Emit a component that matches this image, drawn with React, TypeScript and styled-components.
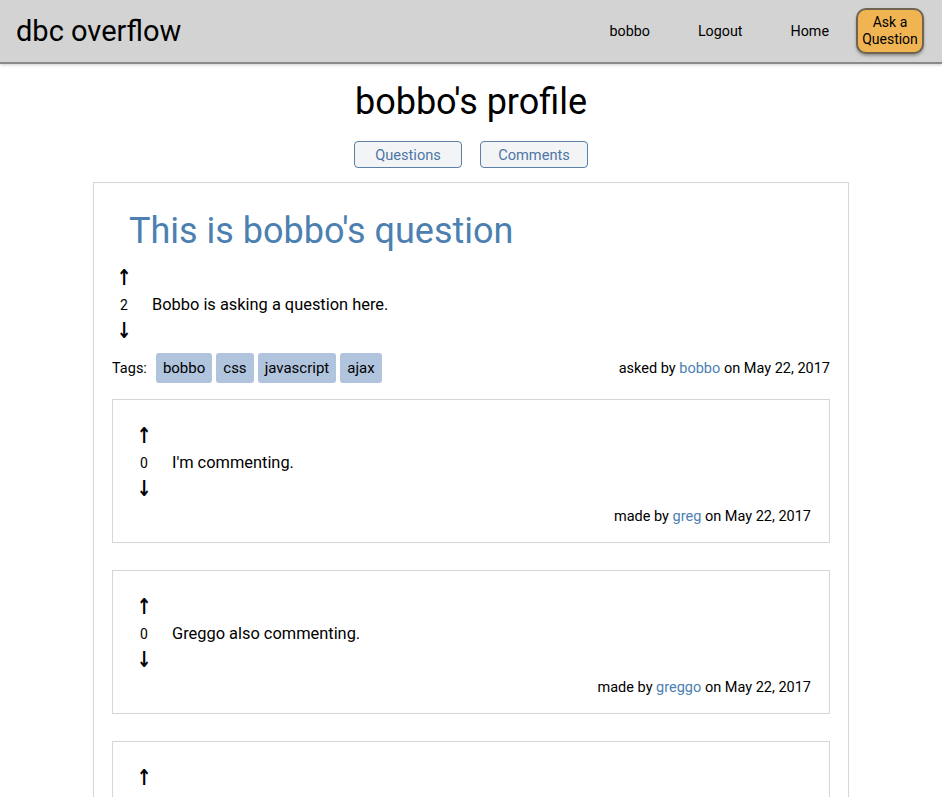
import React from "react";
import styled, { createGlobalStyle } from "styled-components";

const Global = createGlobalStyle`
  html, body { margin: 0; padding: 0; background: #fff; }
  body { font-family: Roboto, "Noto Sans", sans-serif; color: #000; }
`;

const Header = styled.header`
  height: 62px;
  background: #d3d3d3;
  border-bottom: 2px solid #8a8a8a;
  box-shadow: 0 1px 3px rgba(0,0,0,0.2);
  display: flex;
  align-items: center;
  padding: 0 18px 0 16px;
`;

const Brand = styled.div`
  font-size: 29px;
  flex: 1;
`;

const Nav = styled.nav`
  display: flex;
  align-items: center;
  gap: 48px;
`;

const NavLink = styled.a`
  font-size: 14.3px;
  color: #000;
  text-decoration: none;
`;

const AskButton = styled.button`
  width: 68px;
  height: 46px;
  margin-left: -21px;
  background: #f0b552;
  border: 2px solid #6e6450;
  border-radius: 10px;
  box-shadow: 0 2px 3px rgba(0,0,0,0.3);
  font-family: inherit;
  font-size: 14px;
  line-height: 17px;
  padding: 0;
  color: #000;
`;

const Main = styled.main`
  display: flex;
  flex-direction: column;
  align-items: center;
`;

const ProfileTitle = styled.h1`
  font-size: 36px;
  font-weight: 400;
  margin: 17px 0 0;
  line-height: 42px;
`;

const Tabs = styled.div`
  display: flex;
  gap: 18px;
  margin-top: 18px;
`;

const TabButton = styled.button`
  width: 108px;
  height: 27px;
  background: #f3f4f6;
  border: 1px solid #5b7fa6;
  border-radius: 4px;
  color: #4d76a5;
  font-family: inherit;
  font-size: 14.6px;
  padding: 0;
`;

const Card = styled.section`
  width: 756px;
  box-sizing: border-box;
  margin-top: 14px;
  border: 1px solid #d6d6d6;
  padding: 0 18px 0 18px;
`;

const QTitle = styled.h2`
  font-size: 36px;
  font-weight: 400;
  color: #4b80b0;
  margin: 26px 0 0 17px;
  line-height: 44px;
`;

const PostRow = styled.div<{ $indent: number; $top: number }>`
  display: flex;
  align-items: center;
  padding-left: ${(p) => p.$indent}px;
  margin-top: ${(p) => p.$top}px;
`;

const Votes = styled.div`
  display: flex;
  flex-direction: column;
  align-items: center;
  width: 24px;
  font-size: 14px;
  line-height: 18px;
`;

const Arrow = styled.span`
  font-size: 22px;
  line-height: 18px;
  height: 18px;
  font-family: "DejaVu Sans", sans-serif;
  font-weight: 700;
  display: block;
  transform: scaleX(0.8);
`;

const Count = styled.span`
  margin: 9px 0 8px;
`;

const Body = styled.p`
  margin: 0 0 0 16px;
  font-size: 16.4px;
`;

const MetaRow = styled.div`
  display: flex;
  align-items: center;
  justify-content: space-between;
  margin-top: 13px;
  font-size: 14.5px;
`;

const Tags = styled.div`
  display: flex;
  align-items: center;
  gap: 4px;
`;

const TagLabel = styled.span`
  margin-right: 5px;
`;

const Tag = styled.span`
  background: #b0c4de;
  border-radius: 3px;
  padding: 0 7px;
  height: 30px;
  line-height: 30px;
  font-size: 15px;
`;

const Meta = styled.span`
  text-align: right;
`;

const UserLink = styled.a`
  color: #4b80b0;
  text-decoration: none;
`;

const Comments = styled.div`
  display: flex;
  flex-direction: column;
  gap: 27px;
  margin-top: 16px;
`;

const CommentCard = styled.div`
  border: 1px solid #d6d6d6;
  height: 144px;
  box-sizing: border-box;
  padding: 0 18px 0 0;
  display: flex;
  flex-direction: column;
`;

const CommentMeta = styled.div`
  text-align: right;
  font-size: 14.5px;
  margin-top: 10px;
`;

const VoteBlock: React.FC<{ n: number }> = ({ n }) => (
  <Votes>
    <Arrow>↑</Arrow>
    <Count>{n}</Count>
    <Arrow>↓</Arrow>
  </Votes>
);

const comments = [
  { n: 0, text: "I'm commenting.", user: "greg" },
  { n: 0, text: "Greggo also commenting.", user: "greggo" },
  { n: 0, text: "Bobbo likes his own question too.", user: "bobbo" },
];

export default function App() {
  return (
    <>
      <Global />
      <Header>
        <Brand>dbc overflow</Brand>
        <Nav>
          <NavLink href="#">bobbo</NavLink>
          <NavLink href="#">Logout</NavLink>
          <NavLink href="#">Home</NavLink>
          <AskButton>Ask a<br />Question</AskButton>
        </Nav>
      </Header>
      <Main>
        <ProfileTitle>bobbo's profile</ProfileTitle>
        <Tabs>
          <TabButton>Questions</TabButton>
          <TabButton>Comments</TabButton>
        </Tabs>
        <Card>
          <QTitle>This is bobbo's question</QTitle>
          <PostRow $indent={0} $top={16}>
            <VoteBlock n={2} />
            <Body>Bobbo is asking a question here.</Body>
          </PostRow>
          <MetaRow>
            <Tags>
              <TagLabel>Tags:</TagLabel>
              <Tag>bobbo</Tag>
              <Tag>css</Tag>
              <Tag>javascript</Tag>
              <Tag>ajax</Tag>
            </Tags>
            <Meta>
              asked by <UserLink href="#">bobbo</UserLink> on May 22, 2017
            </Meta>
          </MetaRow>
          <Comments>
            {comments.map((c, i) => (
              <CommentCard key={i}>
                <PostRow $indent={19} $top={27}>
                  <VoteBlock n={c.n} />
                  <Body>{c.text}</Body>
                </PostRow>
                <CommentMeta>
                  made by <UserLink href="#">{c.user}</UserLink> on May 22, 2017
                </CommentMeta>
              </CommentCard>
            ))}
          </Comments>
        </Card>
      </Main>
    </>
  );
}
